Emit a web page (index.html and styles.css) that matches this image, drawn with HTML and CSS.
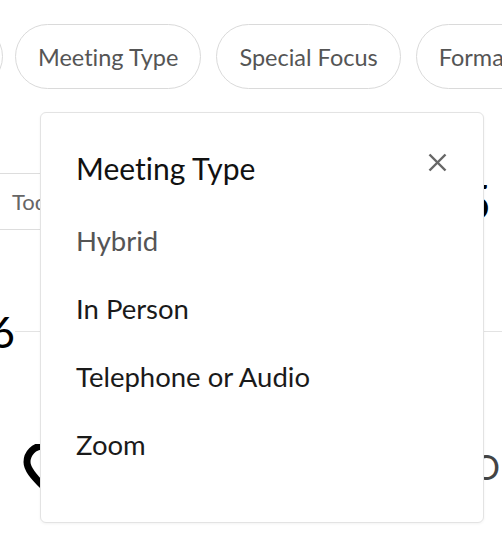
FILE: index.html
```html
<!DOCTYPE html>
<html lang="en">
<head>
<meta charset="utf-8">
<title>Meeting Type filter</title>
<link rel="stylesheet" href="styles.css">
</head>
<body>
<div class="page">
  <div class="chips">
    <div class="chip chip-cut">Day</div>
    <div class="chip">Meeting Type</div>
    <div class="chip">Special Focus</div>
    <div class="chip">Format</div>
  </div>
  <div class="row row-search">
    <div class="search">Today</div>
    <div class="big-digit">5</div>
  </div>
  <div class="row row-date">
    <div class="date">6</div>
    <div class="rule"></div>
  </div>
  <div class="row row-item">
    <svg class="pin" width="40" height="46" viewBox="0 0 40 46" aria-hidden="true">
      <path d="M20 42 C10 32 4 25 4 18 A16 16 0 0 1 36 18 C36 25 30 32 20 42 Z" fill="none" stroke="#000" stroke-width="7" stroke-linejoin="round"/>
    </svg>
    <div class="glyph-gray">O</div>
  </div>

  <div class="popup" role="dialog" aria-label="Meeting Type">
    <div class="popup-head">
      <div class="popup-title">Meeting Type</div>
      <svg class="close" width="19" height="19" viewBox="0 0 19 19" aria-label="Close">
        <line x1="1.5" y1="1.5" x2="17.5" y2="17.5" stroke="#666" stroke-width="2.4" stroke-linecap="butt"/>
        <line x1="17.5" y1="1.5" x2="1.5" y2="17.5" stroke="#666" stroke-width="2.4" stroke-linecap="butt"/>
      </svg>
    </div>
    <ul class="options">
      <li class="option option-muted">Hybrid</li>
      <li class="option">In Person</li>
      <li class="option">Telephone or Audio</li>
      <li class="option">Zoom</li>
    </ul>
  </div>
</div>
</body>
</html>
```
FILE: styles.css
```css
html, body {
  margin: 0;
  padding: 0;
  background: #ffffff;
}

body {
  font-family: Lato, "Noto Sans", sans-serif;
  font-variant-ligatures: none;
  width: 502px;
  height: 541px;
  overflow: hidden;
}

.page {
  position: relative;
  width: 502px;
  height: 541px;
  overflow: hidden;
}

.chips {
  display: flex;
  gap: 15px;
  margin-top: 24px;
  margin-left: -97px;
}

.chip {
  flex: none;
  box-sizing: border-box;
  height: 65px;
  padding: 0 22px;
  border: 1px solid #dadada;
  border-radius: 33px;
  display: flex;
  align-items: center;
  font-size: 23.5px;
  color: #555555;
  white-space: nowrap;
}

.chip-cut {
  width: 100px;
  margin-right: -3px;
  justify-content: center;
}

.row {
  display: flex;
  align-items: center;
}

.row-search {
  margin-top: 84px;
  height: 57px;
}

.search {
  box-sizing: border-box;
  width: 420px;
  height: 57px;
  padding-left: 12px;
  border-top: 1px solid #dddddd;
  border-bottom: 1px solid #dddddd;
  display: flex;
  align-items: center;
  font-size: 22px;
  color: #666666;
}

.big-digit {
  margin-left: auto;
  margin-right: 11px;
  font-size: 48px;
  line-height: 1;
  color: #000000;
}

.row-date {
  margin-top: 80px;
}

.date {
  margin-left: -10px;
  font-size: 43px;
  line-height: 1;
  color: #000000;
}

.rule {
  flex: 1;
  border-top: 1px solid #e3e3e3;
}

.row-item {
  margin-top: 91px;
  justify-content: space-between;
}

.pin {
  margin-left: 23px;
  display: block;
}

.glyph-gray {
  margin-right: 2px;
  font-size: 34px;
  line-height: 1;
  color: #444444;
}

.popup {
  position: absolute;
  left: 40px;
  top: 112px;
  box-sizing: border-box;
  width: 444px;
  height: 411px;
  padding: 36px 36px 0 35px;
  background: #ffffff;
  border: 1px solid #e3e3e3;
  border-radius: 6px;
  box-shadow: 0 1px 3px rgba(0, 0, 0, 0.05);
}

.popup-head {
  display: flex;
  justify-content: space-between;
  align-items: flex-start;
  height: 40px;
}

.popup-title {
  font-size: 30px;
  line-height: 38px;
  color: #111111;
}

.close {
  display: block;
  margin-top: 4px;
  flex: none;
}

.options {
  list-style: none;
  margin: 17px 0 0 0;
  padding: 0;
}

.option {
  height: 68px;
  display: flex;
  align-items: center;
  font-size: 27.5px;
  color: #1a1a1a;
}

.option-muted {
  color: #555555;
}
```
